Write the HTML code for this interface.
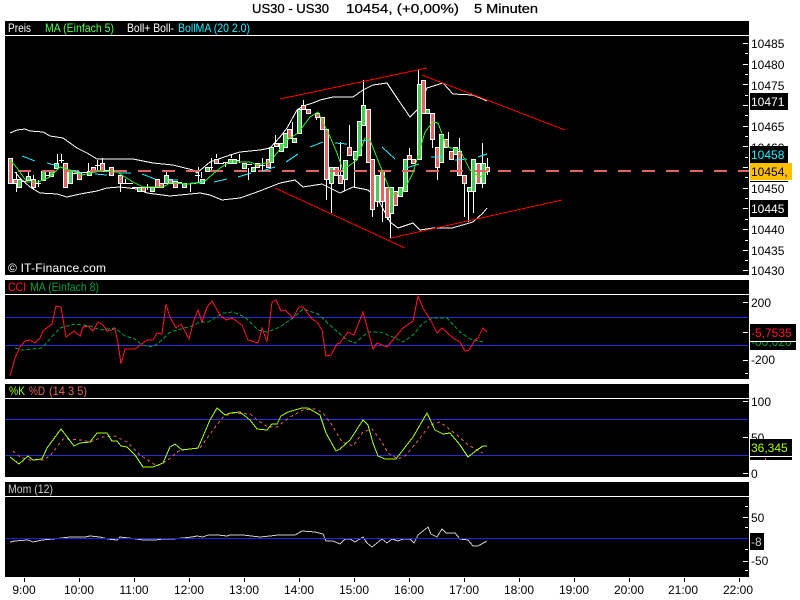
<!DOCTYPE html>
<html><head><meta charset="utf-8"><style>
html,body{margin:0;padding:0;background:#fff;width:800px;height:600px;overflow:hidden}
svg{display:block;font-family:"Liberation Sans",sans-serif}
.c{shape-rendering:crispEdges}
.ln{fill:none;shape-rendering:crispEdges}
.r{fill:#e06666;stroke:#fff}
.g{fill:#44cc55;stroke:#fff}
text{font-size:12px}
</style></head><body>
<svg width="800" height="600" viewBox="0 0 800 600" xmlns="http://www.w3.org/2000/svg">
<defs><clipPath id="cp"><rect x="750" y="342" width="46" height="8"/></clipPath></defs>
<rect width="800" height="600" fill="#fff"/>
<g fill="#000" stroke="#000" stroke-width=".25">
<text x="252" y="13" style="font-size:13px" textLength="77" lengthAdjust="spacingAndGlyphs">US30 - US30</text>
<text x="346" y="13" style="font-size:13px" textLength="113" lengthAdjust="spacingAndGlyphs">10454, (+0,00%)</text>
<text x="474" y="13" style="font-size:13px" textLength="64" lengthAdjust="spacingAndGlyphs">5 Minuten</text>
</g>
<g class="c" fill="#000">
<rect x="5" y="21" width="744" height="254"/>
<rect x="5" y="280" width="744" height="99"/>
<rect x="5" y="384" width="744" height="93"/>
<rect x="5" y="482" width="744" height="95"/>
</g>
<g class="c" fill="#fff">
<rect x="5" y="35" width="744" height="1"/>
<rect x="5" y="294" width="744" height="1"/>
<rect x="5" y="398" width="744" height="1"/>
<rect x="5" y="496" width="744" height="1"/>
</g>
<g class="c" fill="#2a2ad8">
<rect x="5" y="317" width="743" height="1"/>
<rect x="5" y="345" width="743" height="1"/>
<rect x="5" y="419" width="743" height="1"/>
<rect x="5" y="455" width="743" height="1"/>
</g>
<text x="8" y="32" fill="#fff" textLength="23" lengthAdjust="spacingAndGlyphs">Preis</text>
<text x="45" y="32" fill="#55ff55" textLength="69" lengthAdjust="spacingAndGlyphs">MA (Einfach 5)</text>
<text x="127" y="32" fill="#fff" textLength="47" lengthAdjust="spacingAndGlyphs">Boll+ Boll-</text>
<text x="178" y="32" fill="#22eeff" textLength="72" lengthAdjust="spacingAndGlyphs">BollMA (20 2.0)</text>
<text x="8" y="272" fill="#fff" textLength="98">© IT-Finance.com</text>
<text x="8" y="291" fill="#ff1030" textLength="18" lengthAdjust="spacingAndGlyphs">CCI</text>
<text x="30" y="291" fill="#00a040" textLength="69" lengthAdjust="spacingAndGlyphs">MA (Einfach 8)</text>
<text x="9" y="395" fill="#aaff00" textLength="16" lengthAdjust="spacingAndGlyphs">%K</text>
<text x="29" y="395" fill="#e06666" textLength="16" lengthAdjust="spacingAndGlyphs">%D</text>
<text x="49" y="395" fill="#e06666" textLength="38" lengthAdjust="spacingAndGlyphs">(14 3 5)</text>
<text x="8" y="493" fill="#ccc" textLength="45" lengthAdjust="spacingAndGlyphs">Mom (12)</text>

<polyline class="ln" stroke="#fff" points="10,133 17,130 25,129 30,131 43,132 50,136 63,138 70,143 77,148 87,153 97,159 110,159 133,159 153,163 173,165 193,170 197,173 210,162 230,155 240,152 260,150 270,148 280,137 287,128 297,110 303,106 313,103 320,100 333,97 353,97 363,90 373,85 387,83 397,98 410,117 417,110 427,88 443,83 453,94 473,95 487,101"/>
<polyline class="ln" stroke="#fff" points="15,172 20,178 30,187 40,193 57,194 67,197 80,194 97,191 107,188 120,187 137,189 147,193 170,196 200,193 210,195 222,200 240,198 257,192 270,187 280,183 295,180 303,187 322,184 340,193 353,187 368,190 380,203 390,222 398,228 413,223 420,230 433,228 452,228 473,222 483,213 487,208"/>

<path class="ln" stroke="#fff" d="M16.5 172V192M28.5 170V178M33.5 175V190M38.5 180V187M57.5 154V163M61.5 154V163M88.5 163V171M97.5 160V171M102.5 158V163M120.5 183V192M125.5 179V184M147.5 184V190M166.5 172V175M190.5 183V192M198.5 167V183M201.5 172V178M211.5 158V170M216.5 154V158M225.5 162V167M231.5 155V158M239.5 154V163M248.5 168V180M262.5 158V170M275.5 135V143M303.5 100V105M331.5 183V213M326.5 179V200M340.5 142V175M344.5 179V191M349.5 125V147M354.5 159V187M363.5 80V105M372.5 209V217M377.5 201V207M382.5 201V222M387.5 217V220M390.5 213V238M409.5 148V155M418.5 70V84M437.5 167V180M459.5 138V151M464.5 183V217M468.5 191V222M473.5 191V213M482.5 143V163M482.5 183V188M487.5 158V175M448.5 132V139M432.5 139V148M292.5 122V138M316.5 113V120"/>
<path class="ln" stroke="#fff" d="M22 181.5h5M36 183.5h5M45 175.5h5M59 160.5h5M73 173.5h5M82 172.5h5M95 165.5h5M105 170.5h5M114 170.5h5M123 183.5h5M128 183.5h5M132 187.5h5M146 187.5h5M177 182.5h5M191 183.5h5M195 175.5h5M208 167.5h5M219 163.5h5M223 162.5h5M235 160.5h5M247 164.5h5M260 165.5h5"/>
<g class="c">
<path class="r" d="M8.5 158.5h4v25h-4zM13.5 179.5h4v4h-4zM31.5 179.5h4v8h-4zM63.5 163.5h4v24h-4zM77.5 172.5h4v7h-4zM91.5 167.5h4v4h-4zM100.5 163.5h4v8h-4zM109.5 167.5h4v8h-4zM118.5 175.5h4v8h-4zM141.5 187.5h4v4h-4zM155.5 179.5h4v8h-4zM159.5 183.5h4v4h-4zM168.5 179.5h4v4h-4zM173.5 181.5h4v6h-4zM214.5 159.5h4v4h-4zM255.5 163.5h4v4h-4zM266.5 159.5h4v8h-4zM274.5 143.5h4v3h-4zM287.5 129.5h4v9h-4zM301.5 105.5h4v4h-4zM306.5 109.5h4v4h-4zM315.5 113.5h4v4h-4zM320.5 117.5h4v12h-4zM324.5 129.5h4v50h-4zM334.5 167.5h4v8h-4zM338.5 175.5h4v8h-4zM347.5 147.5h4v8h-4zM366.5 109.5h4v53h-4zM370.5 159.5h4v50h-4zM380.5 171.5h4v30h-4zM385.5 187.5h4v30h-4zM393.5 191.5h4v14h-4zM407.5 155.5h4v4h-4zM411.5 159.5h4v4h-4zM421.5 80.5h4v33h-4zM430.5 113.5h4v26h-4zM435.5 147.5h4v20h-4zM444.5 139.5h4v8h-4zM449.5 151.5h4v8h-4zM457.5 151.5h4v24h-4zM462.5 175.5h4v8h-4zM476.5 163.5h4v20h-4zM485.5 167.5h4v4h-4z"/>
<path class="g" d="M17.5 179.5h4v8h-4zM26.5 176.5h4v4h-4zM41.5 171.5h4v9h-4zM49.5 171.5h4v5h-4zM54.5 163.5h4v5h-4zM68.5 171.5h4v12h-4zM87.5 171.5h4v4h-4zM137.5 187.5h4v4h-4zM150.5 187.5h4v4h-4zM164.5 175.5h4v8h-4zM182.5 183.5h4v4h-4zM200.5 179.5h4v4h-4zM205.5 167.5h4v4h-4zM228.5 159.5h4v4h-4zM232.5 159.5h4v4h-4zM242.5 163.5h4v5h-4zM251.5 167.5h4v4h-4zM269.5 147.5h4v15h-4zM279.5 143.5h4v8h-4zM283.5 133.5h4v14h-4zM292.5 138.5h4v4h-4zM297.5 109.5h4v24h-4zM329.5 167.5h4v16h-4zM343.5 160.5h4v19h-4zM353.5 151.5h4v8h-4zM357.5 121.5h4v34h-4zM361.5 105.5h4v20h-4zM375.5 175.5h4v26h-4zM389.5 187.5h4v26h-4zM398.5 187.5h4v9h-4zM403.5 159.5h4v32h-4zM417.5 84.5h4v75h-4zM425.5 109.5h4v4h-4zM439.5 134.5h4v28h-4zM453.5 147.5h4v7h-4zM467.5 187.5h4v4h-4zM471.5 159.5h4v32h-4zM481.5 163.5h4v20h-4z"/>
</g>

<path class="ln" stroke="#e06666" stroke-width="2" stroke-dasharray="13 11" d="M18 171H749"/>
<path class="ln" stroke="#22eeff" d="M22 156L35 161M47 163L58 166M70 170L83 173M95 174L107 175M118 173L131 173M142 174L155 179M167 180L178 180M191 183L203 183M214 182L227 179M238 177L251 173M262 171L275 167M286 162L298 154M310 147L323 142M335 143L347 144M360 141L370 140M382 147L395 159M406 168L419 164M431 157L443 157M455 160L467 159M478 157L487 154"/>
<polyline class="ln" stroke="#33ee22" points="10,160 17,168 27,182 38,182 50,177 60,167 72,171 82,175 100,171 117,172 133,182 143,187 163,187 170,183 190,184 205,181 220,168 230,162 250,162 257,165 270,162 287,140 298,133 310,117 318,112 328,132 337,153 343,170 357,160 365,138 370,140 383,173 392,195 403,192 413,173 425,132 433,122 438,123 447,147 460,150 470,170 480,177 487,172"/>
<path class="ln" stroke="#ff0000" d="M280 99L427 68M422 75L565 130M275 188L405 248M391 238L562 200"/>

<polyline class="ln" stroke="#00a040" stroke-dasharray="4 2" points="15,348 22,350 42,348 47,342 60,328 75,324 90,326 100,330 115,328 125,336 135,339 142,345 153,347 162,340 170,332 192,326 200,322 208,322 223,313 233,312 245,317 258,330 267,332 280,327 293,318 303,309 318,314 333,328 347,340 355,343 368,332 380,332 393,337 403,342 413,335 423,323 433,318 447,318 460,332 470,339 483,342"/>
<polyline class="ln" stroke="#ff1030" points="10,376 15,358 20,347 25,341 30,340 35,343 40,338 43,331 52,324 56,306 61,307 66,337 74,331 80,336 83,327 88,326 93,331 98,322 103,325 107,331 115,329 118,343 121,364 125,349 135,349 147,340 153,340 157,333 162,334 166,304 170,317 176,328 181,324 189,339 194,320 198,310 202,322 207,307 212,301 220,315 226,320 232,318 242,325 248,340 258,343 260,336 262,328 267,342 272,302 276,300 281,311 285,310 293,318 299,307 303,307 312,319 317,322 322,330 326,356 331,355 337,344 340,343 348,332 354,335 363,312 373,349 377,343 387,347 403,328 413,321 418,296 423,308 430,319 437,333 442,328 453,338 460,342 465,351 469,350 475,340 478,338 483,328 487,332"/>

<polyline class="ln" stroke="#e06666" stroke-dasharray="3 3" points="13,451 20,457 30,460 43,460 50,456 63,439 82,440 90,442 103,437 115,436 127,442 140,455 157,466 168,460 180,450 200,448 213,430 223,417 233,413 250,414 260,422 268,427 277,427 290,417 303,410 315,409 323,413 332,425 342,442 353,446 363,432 372,429 382,442 388,453 398,459 405,456 417,442 430,425 440,422 457,435 468,445 483,453"/>
<polyline class="ln" stroke="#aaff00" points="10,457 19,464 28,456 33,460 42,459 47,448 61,429 68,438 74,446 80,443 90,442 97,433 107,433 112,441 117,441 121,446 127,447 135,455 143,467 153,467 163,463 170,447 175,444 182,450 198,448 210,420 217,408 225,415 230,413 240,412 250,420 257,429 267,430 272,424 277,424 281,416 288,412 302,408 308,408 320,415 326,433 336,451 340,449 350,440 363,420 368,425 373,443 378,456 385,459 396,459 413,437 427,413 435,430 443,434 450,433 460,445 468,457 477,450 483,446 487,446"/>

<polyline class="ln" stroke="#ccc" points="10,542 15,541 28,540 33,542 42,540 53,539 70,537 85,537 90,536 100,537 108,539 117,540 120,537 137,539 143,540 155,540 163,539 173,539 192,537 197,536 203,537 208,535 218,535 227,536 230,535 243,535 260,537 270,536 278,535 295,535 302,531 315,532 323,534 326,541 333,541 340,544 345,539 350,539 355,542 363,537 367,543 372,547 382,539 387,543 392,539 398,541 403,539 410,539 414,543 418,535 428,527 431,534 437,537 442,529 446,533 455,533 460,539 468,540 473,546 478,546 487,541"/>
<rect class="c" x="5" y="538" width="743" height="1" fill="#2020e8"/>

<path class="ln" stroke="#fff" d="M743 43.5h5M745 53.5h3M743 64.5h5M745 74.5h3M743 84.5h5M745 95.5h3M743 105.5h5M745 115.5h3M743 126.5h5M745 136.5h3M743 146.5h5M745 157.5h3M743 167.5h5M745 177.5h3M743 188.5h5M745 198.5h3M743 208.5h5M745 219.5h3M743 229.5h5M745 240.5h3M743 250.5h5M745 260.5h3M743 270.5h5M743 302.5h5M743 332.5h5M743 360.5h5M745 373.5h3M743 401.5h5M743 437.5h5M743 473.5h5M745 506.5h3M743 517.5h5M745 527.5h3M745 549.5h3M743 561.5h5M745 570.5h3"/>

<g fill="#000">
<text x="751" y="48">10485</text>
<text x="751" y="69">10480</text>
<text x="751" y="90">10475</text>
<text x="751" y="131">10465</text>
<text x="751" y="152">10460</text>
<text x="751" y="193">10450</text>
<text x="751" y="234">10440</text>
<text x="751" y="255">10435</text>
<text x="751" y="275">10430</text>
<text x="751" y="307">200</text>
<text x="751" y="364">-200</text>
<text x="751" y="406">100</text>
<text x="751" y="442">50</text>
<text x="751" y="478">0</text>
<text x="751" y="522">50</text>
<text x="751" y="565">-50</text>
</g>
<g class="c">
<rect x="750" y="93" width="38" height="17" fill="#000"/>
<rect x="750" y="146" width="38" height="17" fill="#000"/>
<rect x="750" y="163" width="42" height="17" fill="#ffc000"/>
<rect x="750" y="181" width="38" height="1" fill="#000"/>
<rect x="750" y="200" width="38" height="17" fill="#000"/>
<rect x="750" y="324" width="46" height="17" fill="#000"/>
<rect x="750" y="341" width="46" height="1" fill="#fff"/>
<rect x="750" y="342" width="46" height="8" fill="#000"/>
<rect x="750" y="439" width="42" height="17" fill="#000"/>
<rect x="750" y="456" width="42" height="1" fill="#fff"/>
<rect x="750" y="457" width="42" height="3" fill="#000"/>
<rect x="765" y="458" width="1" height="2" fill="#e06666"/>
<rect x="750" y="533" width="14" height="17" fill="#000"/>
</g>
<text x="751" y="106" fill="#fff">10471</text>
<text x="751" y="159" fill="#22eeff">10458</text>
<text x="751" y="176" fill="#000">10454,</text>
<text x="751" y="213" fill="#fff">10445</text>
<text x="751" y="337" fill="#ff1030">-5,7535</text>
<text x="751" y="346" fill="#00a040" clip-path="url(#cp)">-00,020</text>
<text x="751" y="452" fill="#aaff00">36,345</text>
<text x="751" y="546" fill="#ccc">-8</text>

<path class="ln" stroke="#000" d="M24.5 578v4M79.5 578v4M134.5 578v4M189.5 578v4M244.5 578v4M299.5 578v4M354.5 578v4M409.5 578v4M464.5 578v4M519.5 578v4M574.5 578v4M629.5 578v4M684.5 578v4M739.5 578v4"/>
<g fill="#000" text-anchor="middle">
<text x="24" y="594">9:00</text>
<text x="79" y="594">10:00</text>
<text x="134" y="594">11:00</text>
<text x="189" y="594">12:00</text>
<text x="244" y="594">13:00</text>
<text x="299" y="594">14:00</text>
<text x="354" y="594">15:00</text>
<text x="409" y="594">16:00</text>
<text x="464" y="594">17:00</text>
<text x="519" y="594">18:00</text>
<text x="574" y="594">19:00</text>
<text x="629" y="594">20:00</text>
<text x="683" y="594">21:00</text>
<text x="738" y="594">22:00</text>
</g>
</svg>
</body></html>
